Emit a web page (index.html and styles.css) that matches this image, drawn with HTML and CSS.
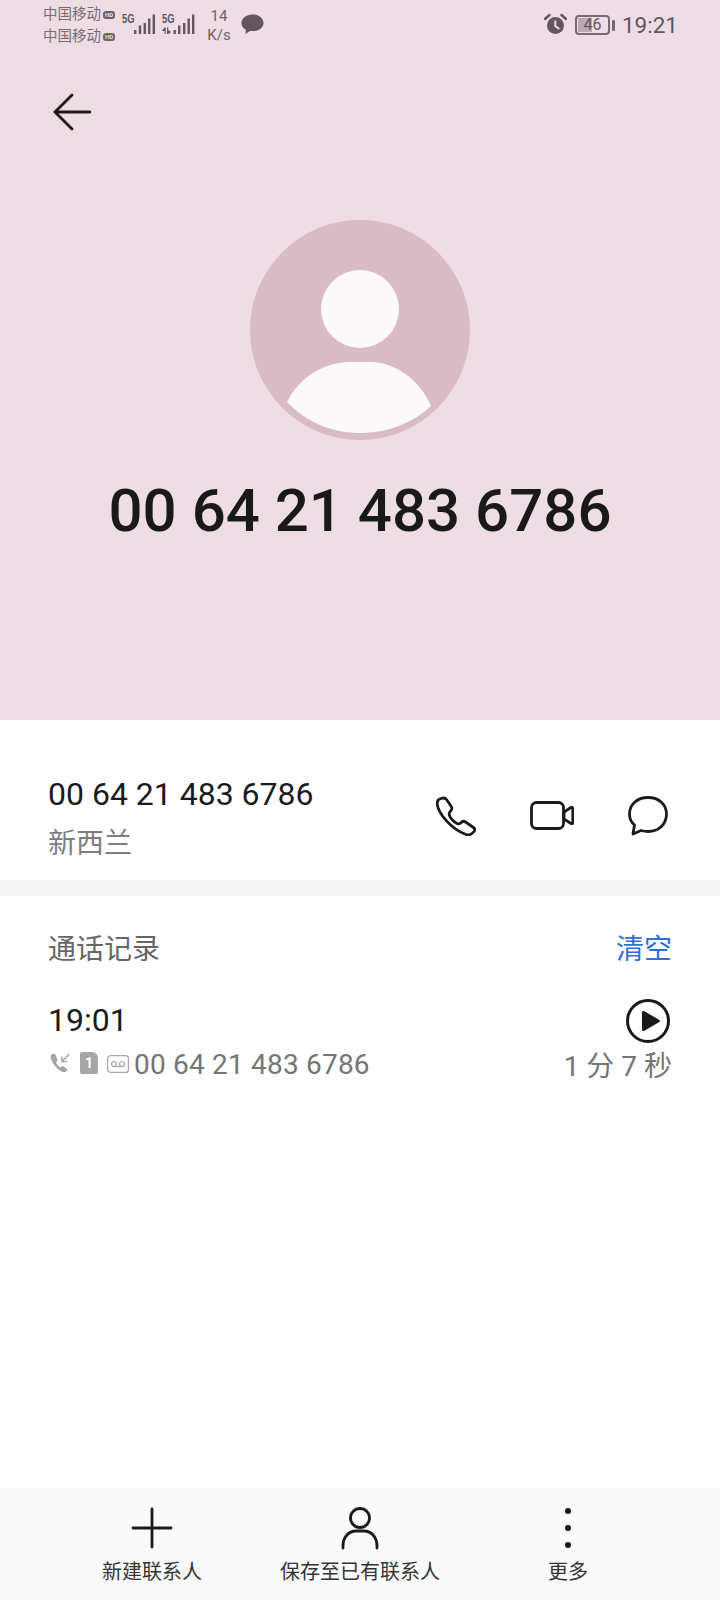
FILE: index.html
```html
<!DOCTYPE html>
<html lang="zh-CN">
<head>
    <meta charset="UTF-8">
    <meta name="viewport" content="width=device-width, initial-scale=1.0">
    <title>通话详情</title>
    <link rel="stylesheet" href="styles.css">
</head>
<body>
    <div class="page">
        <header class="hero">
            <div class="status-bar">
                <div class="carriers">
                    <div class="carrier">中国移动<span class="hd">HD</span></div>
                    <div class="carrier">中国移动<span class="hd">HD</span></div>
                </div>
                <div class="signal">
                    <span class="five-g">5G</span>
                    <svg width="23" height="22" viewBox="0 0 23 22">
                        <rect x="1" y="17" width="2.4" height="4" />
                        <rect x="5.8" y="12.5" width="2.4" height="8.5" />
                        <rect x="10.6" y="10" width="2.4" height="11" />
                        <rect x="15" y="5.5" width="2.4" height="15.5" />
                        <rect x="19.6" y="1.5" width="2.4" height="19.5" />
                    </svg>
                </div>
                <div class="signal signal-second">
                    <span class="five-g">5G</span>
                    <svg width="33" height="22" viewBox="0 0 33 22">
                        <path d="M0 18l2.500-3.500h1.200v6.500h-1.200v-3zM5 14.500h1.200v2.500l3 2-3 2h-1.200z" />
                        <rect x="11.500" y="17" width="2.400" height="4" />
                        <rect x="16" y="12.500" width="2.400" height="8.500" />
                        <rect x="21" y="10" width="2.400" height="11" />
                        <rect x="25.500" y="5.500" width="2.400" height="15.500" />
                        <rect x="30" y="1.500" width="2.400" height="19.500" />
                    </svg>
                </div>
                <div class="speed"><span>14</span><span>K/s</span></div>
                <svg class="bubble" width="23" height="21" viewBox="0 0 23 21">
                    <path d="M11.500 0.500C5.200 0.500 0.500 4.300 0.500 8.900c0 2.900 1.700 5.300 4.300 6.800l-0.300 4.300 4.300-3.100c0.900 0.200 1.800 0.200 2.700 0.200 6.300 0 11-3.600 11-8.200S17.800 0.500 11.500 0.500z" />
                </svg>
                <div class="status-right">
                    <svg class="alarm" width="23" height="22" viewBox="0 0 23 22">
                        <circle cx="11.500" cy="12.500" r="8.500" />
                        <path class="alarm-hands" d="M11.300 7.500v5.500l4 3" />
                        <path class="alarm-ears" d="M1 6l4.500-4M22 6l-4.500-4" />
                    </svg>
                    <div class="battery">
                        <div class="battery-body"><span class="battery-level"></span><span class="battery-num">46</span></div>
                        <span class="battery-tip"></span>
                    </div>
                    <span class="clock">19:21</span>
                </div>
            </div>

            <button class="back">
                <svg width="40" height="38" viewBox="0 0 40 38">
                    <path d="M21 2L4 19l17 17M4 19h35" />
                </svg>
            </button>

            <div class="avatar">
                <svg width="220" height="220" viewBox="0 0 220 220">
                    <circle cx="110" cy="110" r="110" fill="#d9bcc5" />
                    <circle cx="110" cy="89" r="39" fill="#fbf9fa" />
                    <path d="M37 182C49 157 75 142 100 142h20c25 0 50 18 61 44-18 17-44 27-71 27s-53-10-73-31z" fill="#fbf9fa" />
                </svg>
            </div>
            <h1 class="hero-number">00 64 21 483 6786</h1>
        </header>

        <section class="detail">
            <div class="detail-text">
                <div class="detail-number">00 64 21 483 6786</div>
                <div class="detail-region">新西兰</div>
            </div>
            <div class="detail-actions">
                <svg class="action" width="40" height="40" viewBox="0 0 40 40">
                    <path d="M5 2.500C3 3 1 5 1.200 8 2 17 15 33 30 38.500c3 1 6-.5 8-3 1-1.500 1-3-.5-4l-8-5.500c-1.500-1-3-.8-4 .2L24 27.500c-2 1-4 0-7-3s-4.500-6-3.500-8l1.500-2c1-1 1-2.500.3-4L10.500 3.500C9 1.500 7 1.800 5 2.500z" />
                </svg>
                <svg class="action" width="44" height="30" viewBox="0 0 44 30">
                    <rect x="1.500" y="1.500" width="32" height="26" rx="5" />
                    <path d="M34 11l7-4.500c1-.6 1.800 0 1.800 1v14c0 1-.8 1.600-1.800 1l-7-4.500z" />
                </svg>
                <svg class="action" width="40" height="40" viewBox="0 0 40 40">
                    <path d="M20 1.500C9 1.500 1.500 8.500 1.500 18c0 5 2.500 9 5 11L5 38l8-3.500c2 .5 5 1 7 1 11 0 18.500-7.500 18.500-17.500C38.500 8.500 31 1.500 20 1.500z" />
                </svg>
            </div>
        </section>

        <div class="band"></div>

        <section class="log">
            <div class="log-head">
                <span class="log-title">通话记录</span>
                <span class="log-clear">清空</span>
            </div>
            <div class="log-row">
                <span class="log-time">19:01</span>
                <svg class="play" width="44" height="44" viewBox="0 0 44 44">
                    <circle class="play-ring" cx="22" cy="22" r="20.500" />
                    <path class="play-arrow" d="M16 13.500c0-1.500 1-2 2.300-1.300l14.700 8.500c1.200.7 1.200 1.900 0 2.600l-14.700 8.500c-1.300.7-2.300.2-2.300-1.300z" />
                </svg>
            </div>
            <div class="log-row log-row-sub">
                <div class="log-meta">
                    <svg class="call-in" width="21" height="20" viewBox="0 0 21 20">
                        <path class="call-in-phone" d="M3 .8C1.200 1.300.3 2.800.7 4.700 2 10.500 6.800 16.200 12.500 19c1.700.7 3.300.2 4.300-1.300.6-1 .4-1.800-.5-2.400l-2.800-1.900c-.8-.5-1.600-.4-2.200.3l-.8.800c-1.600-.7-4-3.500-4.700-5.200l1-.8c.7-.6.800-1.400.4-2.200L5.500 1.700C4.900.7 4 .5 3 .8z" />
                        <path class="call-in-arrow" d="M19.500 1L12 8.500M12 3.500v5h5" />
                    </svg>
                    <div class="sim">1</div>
                    <svg class="voicemail" width="22" height="18" viewBox="0 0 22 18">
                        <rect x=".6" y=".6" width="20.800" height="16.800" rx="3" />
                        <circle cx="7" cy="9" r="2.500" />
                        <circle cx="15" cy="9" r="2.500" />
                        <path d="M7 11.500h8" />
                    </svg>
                    <span class="log-number">00 64 21 483 6786</span>
                </div>
                <span class="log-duration">1 分 7 秒</span>
            </div>
        </section>

        <nav class="toolbar">
            <div class="tool">
                <svg width="44" height="44" viewBox="0 0 44 44"><path class="tool-line" d="M3 22h38M22 3v38" /></svg>
                <span>新建联系人</span>
            </div>
            <div class="tool">
                <svg width="44" height="44" viewBox="0 0 44 44">
                    <circle class="tool-line" cx="22" cy="12" r="9.500" />
                    <path class="tool-line" d="M5 42v-2c0-8 5-15 13-15h8c8 0 13 7 13 15v2" />
                </svg>
                <span>保存至已有联系人</span>
            </div>
            <div class="tool">
                <svg width="44" height="44" viewBox="0 0 44 44">
                    <circle cx="22" cy="5" r="3" />
                    <circle cx="22" cy="22" r="3" />
                    <circle cx="22" cy="39" r="3" />
                </svg>
                <span>更多</span>
            </div>
        </nav>
    </div>
</body>
</html>
```

FILE: styles.css
```css
* { box-sizing: border-box; margin: 0; padding: 0; }
body { font-family: Roboto, "Noto Sans CJK SC", sans-serif; background: #fff; color: #1a1a1a; }

.page {
    display: flex;
    flex-direction: column;
    width: 720px;
    height: 1600px;
    overflow: hidden;
}

/* top pink area */
.hero {
    display: flex;
    flex-direction: column;
    align-items: center;
    height: 720px;
    flex-shrink: 0;
    background: #eedde5;
}

.status-bar {
    display: flex;
    align-items: flex-start;
    width: 100%;
    height: 48px;
    padding: 4px 42px 0 43px;
    color: #63565c;
    fill: #63565c;
}

.carriers { width: 79px; font-size: 14.5px; line-height: 22px; }
.carrier { display: flex; align-items: center; white-space: nowrap; color: #7a6c73; }

.hd {
    width: 12px;
    height: 8px;
    margin-left: 2px;
    border-radius: 3px;
    background: #6f6268;
    color: #eedde5;
    font-size: 6px;
    font-weight: 700;
    line-height: 8px;
    text-align: center;
}

.signal { display: flex; align-items: flex-start; width: 34px; margin-top: 9px; }
.signal-second { width: 33px; margin-left: 6px; }
.signal-second svg { margin-left: -11px; }

/* 5G is tall and narrow in the status bar */
.five-g {
    width: 11px;
    flex-shrink: 0;
    font-family: "Liberation Sans", sans-serif;
    font-size: 13px;
    font-weight: 700;
    line-height: 11px;
    transform: scaleX(0.72);
    transform-origin: left top;
    white-space: nowrap;
}

.speed {
    display: flex;
    flex-direction: column;
    align-items: center;
    width: 24px;
    margin: 3px 0 0 12px;
    font-size: 15px;
    line-height: 18.500px;
    color: #6f6168;
}

.bubble { margin: 10px 0 0 10px; }

.status-right { display: flex; align-items: center; height: 42px; margin-left: auto; }
.alarm { margin-top: -3px; }
.alarm-hands { fill: none; stroke: #eedde5; stroke-width: 2; }
.alarm-ears { fill: none; stroke: #63565c; stroke-width: 2.500; stroke-linecap: round; }

.battery { display: flex; align-items: center; margin-left: 8px; }
.battery-body {
    position: relative;
    width: 35px;
    height: 20px;
    border: 2px solid #766970;
    border-radius: 4px;
    text-align: center;
    font-size: 16px;
    line-height: 16px;
}
.battery-level { position: absolute; left: 1px; top: 1px; bottom: 1px; width: 14px; background: #bda9b2; }
.battery-num { position: relative; }
.battery-tip { width: 3px; height: 11px; margin-left: 2px; border-radius: 1px; background: #766970; }
.clock { margin-left: 7px; font-size: 22.500px; color: #63565c; }

.back {
    align-self: flex-start;
    width: 40px;
    height: 38px;
    margin: 45px 0 0 51px;
    border: none;
    background: none;
}
.back svg { display: block; fill: none; stroke: #1a1a1a; stroke-width: 2.800; stroke-linecap: round; }

.avatar { margin-top: 89px; height: 220px; }
.avatar svg { display: block; }

.hero-number {
    margin-top: 32px;
    font-size: 60px;
    font-weight: 500;
    line-height: 78px;
    color: #191919;
}

/* number row */
.detail {
    display: flex;
    justify-content: space-between;
    align-items: center;
    height: 160px;
    padding: 34px 52px 0 48px;
}
.detail-number { font-size: 32px; line-height: 40px; }
.detail-region { margin-top: 12px; margin-bottom: -2px; font-size: 28px; line-height: 36px; color: #7d7d7d; }

.detail-actions { display: flex; align-items: center; gap: 54px; margin-top: -2px; }
.action { fill: none; stroke: #1a1a1a; stroke-width: 2.800; stroke-linejoin: round; }

.band { height: 16px; background: #f5f5f5; flex-shrink: 0; }

/* call log */
.log { flex: 1; padding: 0 48px; }
.log-head {
    display: flex;
    justify-content: space-between;
    align-items: center;
    height: 102px;
    font-size: 28px;
}
.log-title { color: #666; }
.log-clear { color: #2f70d8; }

.log-row { display: flex; justify-content: space-between; align-items: center; height: 44px; }
.log-time { font-size: 32px; }
.play { margin: 2px 2px 0 0; }
.play-ring { fill: none; stroke: #1a1a1a; stroke-width: 3; }
.play-arrow { fill: #1a1a1a; }

.log-row-sub { height: 40px; margin-top: 2px; font-size: 28px; color: #757575; }
.log-meta { display: flex; align-items: center; }
.call-in { margin: -2px 0 0 2px; }
.call-in-phone { fill: #a6a6a6; }
.call-in-arrow { fill: none; stroke: #a6a6a6; stroke-width: 1.500; }
.sim {
    width: 18px;
    height: 22px;
    margin: -2px 0 0 9px;
    border-radius: 2px 6px 2px 2px;
    background: #a6a6a6;
    color: #fff;
    font-size: 14px;
    font-weight: 700;
    line-height: 22px;
    text-align: center;
}
.voicemail { margin-left: 9px; fill: none; stroke: #a6a6a6; stroke-width: 1.200; }
.log-number { margin-left: 5px; letter-spacing: 0.200px; }

/* bottom bar */
.toolbar {
    display: grid;
    grid-template-columns: repeat(3, 208px);
    height: 112px;
    padding: 18px 48px 0;
    background: #fafafa;
    flex-shrink: 0;
}
.tool {
    display: flex;
    flex-direction: column;
    align-items: center;
    font-size: 20px;
    line-height: 28px;
    color: #333;
    white-space: nowrap;
}
.tool svg { display: block; fill: #1a1a1a; }
.tool-line { fill: none; stroke: #1a1a1a; stroke-width: 2.800; stroke-linecap: round; }
.tool span { margin-top: 8px; }
```
